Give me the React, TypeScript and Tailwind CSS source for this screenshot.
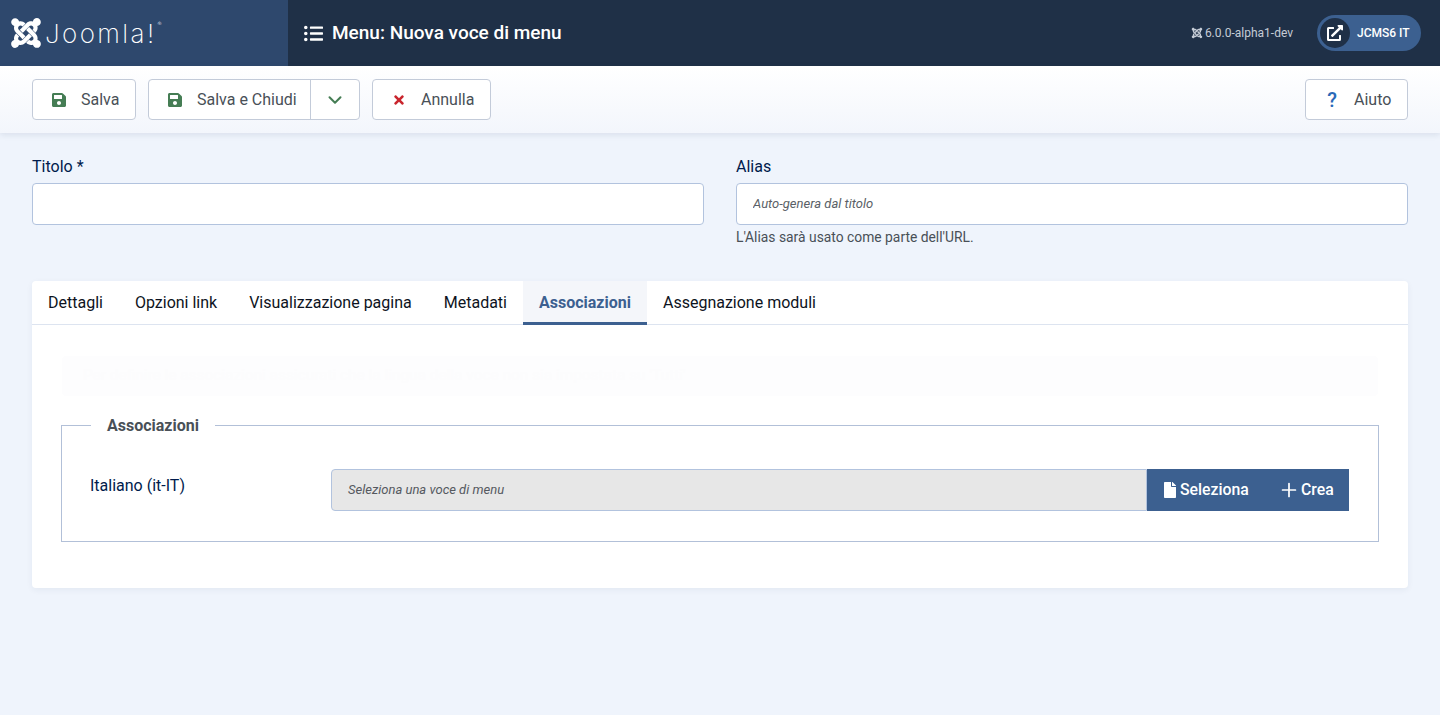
import React from "react";
import { ChevronDown, Plus } from "lucide-react";
import { FaJoomla, FaSave, FaTimes, FaListUl, FaExternalLinkAlt, FaFile } from "react-icons/fa";

function Btn({ children, className = "" }: { children: React.ReactNode; className?: string }) {
  return (
    <button className={"flex h-[41px] items-center rounded-[4px] border border-[#c3cbd9] bg-white text-[16px] text-[#495057] " + className}>
      {children}
    </button>
  );
}

export default function App() {
  return (
    <div className="flex min-h-[715px] flex-col bg-[#eff4fc] font-['Roboto',sans-serif]">
      <header className="flex h-[66px] items-center bg-[#1f3047]">
        <div className="flex h-full w-[288px] items-center gap-[2px] bg-[#2e486d] pl-[9px]">
          <FaJoomla size={34} color="#ffffff" />
          <span className="relative mt-[1px] font-['Inter',sans-serif] text-[26px] leading-none font-extralight tracking-[2.4px] text-white">
            Joomla!
            <span className="absolute -right-[5px] top-[0px] text-[6px] tracking-normal">®</span>
          </span>
        </div>
        <div className="flex items-center gap-[9px] pl-[16px] text-white">
          <FaListUl size={19} />
          <h1 className="mt-[1px] text-[19px] font-medium">Menu: Nuova voce di menu</h1>
        </div>
        <div className="ml-auto flex items-center gap-[24px] pr-[19px]">
          <div className="flex items-center gap-[2px] text-[12px] text-[#c5ccd6]">
            <FaJoomla size={12} color="#c5ccd6" />
            <span>6.0.0-alpha1-dev</span>
          </div>
          <div className="flex h-[36px] w-[104px] items-center rounded-full bg-[#3c6090] pl-[3px]">
            <span className="flex h-[30px] w-[30px] items-center justify-center rounded-full bg-[#1f3047] text-white">
              <FaExternalLinkAlt size={16} />
            </span>
            <span className="ml-[7px] text-[12px] font-medium text-white">JCMS6 IT</span>
          </div>
        </div>
      </header>

      <div className="flex h-[67px] items-center justify-between bg-gradient-to-b from-white to-[#f3f6fc] px-[32px] shadow-[0_2px_6px_rgba(30,50,90,0.1)]">
        <div className="flex items-center gap-[12px]">
          <Btn className="w-[104px] pl-[18px]">
            <FaSave size={16} className="text-[#457d54]" />
            <span className="ml-[14px]">Salva</span>
          </Btn>
          <Btn className="w-[212px] pl-[18px]">
            <FaSave size={16} className="text-[#457d54]" />
            <span className="ml-[14px]">Salva e Chiudi</span>
            <span className="ml-[13px] flex h-full flex-1 items-center justify-center border-l border-[#c3cbd9] text-[#457d54]">
              <ChevronDown size={22} strokeWidth={2.2} />
            </span>
          </Btn>
          <Btn className="w-[119px] pl-[19px]">
            <FaTimes size={14} className="text-[#c9252d]" />
            <span className="ml-[15px]">Annulla</span>
          </Btn>
        </div>
        <Btn className="w-[103px] pl-[20px]">
          <span className="w-[12px] text-center text-[20px] leading-none font-medium text-[#2a69b8]">?</span>
          <span className="ml-[16px]">Aiuto</span>
        </Btn>
      </div>

      <main className="flex flex-col px-[32px]">
        <div className="mt-[22px] grid grid-cols-2 gap-[32px]">
          <div>
            <label className="block text-[16px] leading-[24px] text-[#001b4c]">Titolo *</label>
            <input className="mt-[4px] block h-[42px] w-full rounded-[4px] border border-[#b2c3de] bg-white" />
          </div>
          <div>
            <label className="block text-[16px] leading-[24px] text-[#001b4c]">Alias</label>
            <input
              placeholder="Auto-genera dal titolo"
              className="mt-[4px] block h-[42px] w-full rounded-[4px] border border-[#b2c3de] bg-white px-[16px] pb-[2px] text-[13px] italic placeholder:text-[#5a5f66]"
            />
            <p className="mt-[4px] text-[13.85px] leading-[16px] text-[#495057]">L'Alias sarà usato come parte dell'URL.</p>
          </div>
        </div>

        <section className="mt-[36px] h-[307px] rounded-[4px] bg-white shadow-[0_2px_6px_rgba(30,50,90,0.06)]">
          <nav className="flex h-[44px] border-b border-[#dde4f0] text-[16px] text-[#0d1321]">
            <span className="flex items-center px-[16px]">Dettagli</span>
            <span className="flex items-center px-[16px]">Opzioni link</span>
            <span className="flex items-center px-[16px]">Visualizzazione pagina</span>
            <span className="flex items-center px-[16px]">Metadati</span>
            <span className="flex h-[44px] items-center border-b-[3px] border-[#3c6090] bg-[#f4f6fa] px-[16px] pt-[3px] font-bold text-[#3c6090]">
              Associazioni
            </span>
            <span className="flex items-center px-[16px]">Assegnazione moduli</span>
          </nav>

          <div className="px-[29px] pt-[31px]">
            <div className="mx-[1px] flex h-[40px] items-center rounded-[4px] bg-[#fdfdfe] pl-[21px] text-[15.4px] text-[#fcfcfd]">
              Per definire le associazioni assicurati che la lingua della voce non sia impostata su 'Tutti'
            </div>

            <fieldset className="mt-[18px] h-[128px] border border-[#b2c0d8] pr-[29px] pl-[28px]">
              <legend className="ml-[1px] px-[16px] pt-[2px] text-[16px] leading-[20px] font-bold text-[#495057]">Associazioni</legend>
              <div className="mt-[33px] flex items-start">
                <label className="w-[241px] pt-[5px] text-[16px] leading-[24px] text-[#001b4c]">Italiano (it-IT)</label>
                <div className="flex h-[42px] flex-1">
                  <div className="flex flex-1 items-center rounded-l-[4px] border border-[#b2c3de] bg-[#e7e7e7] pl-[16px] text-[13px] text-[#55595f] italic">
                    Seleziona una voce di menu
                  </div>
                  <button className="flex w-[118px] items-center gap-[2px] bg-[#3c6090] pl-[15px] text-[15.8px] font-medium text-white">
                    <FaFile size={16} />
                    Seleziona
                  </button>
                  <button className="flex w-[84px] items-center gap-[1px] bg-[#3c6090] pl-[13px] text-[15.8px] font-medium text-white">
                    <Plus size={22} strokeWidth={1.9} />
                    Crea
                  </button>
                </div>
              </div>
            </fieldset>
          </div>
        </section>
      </main>
    </div>
  );
}
